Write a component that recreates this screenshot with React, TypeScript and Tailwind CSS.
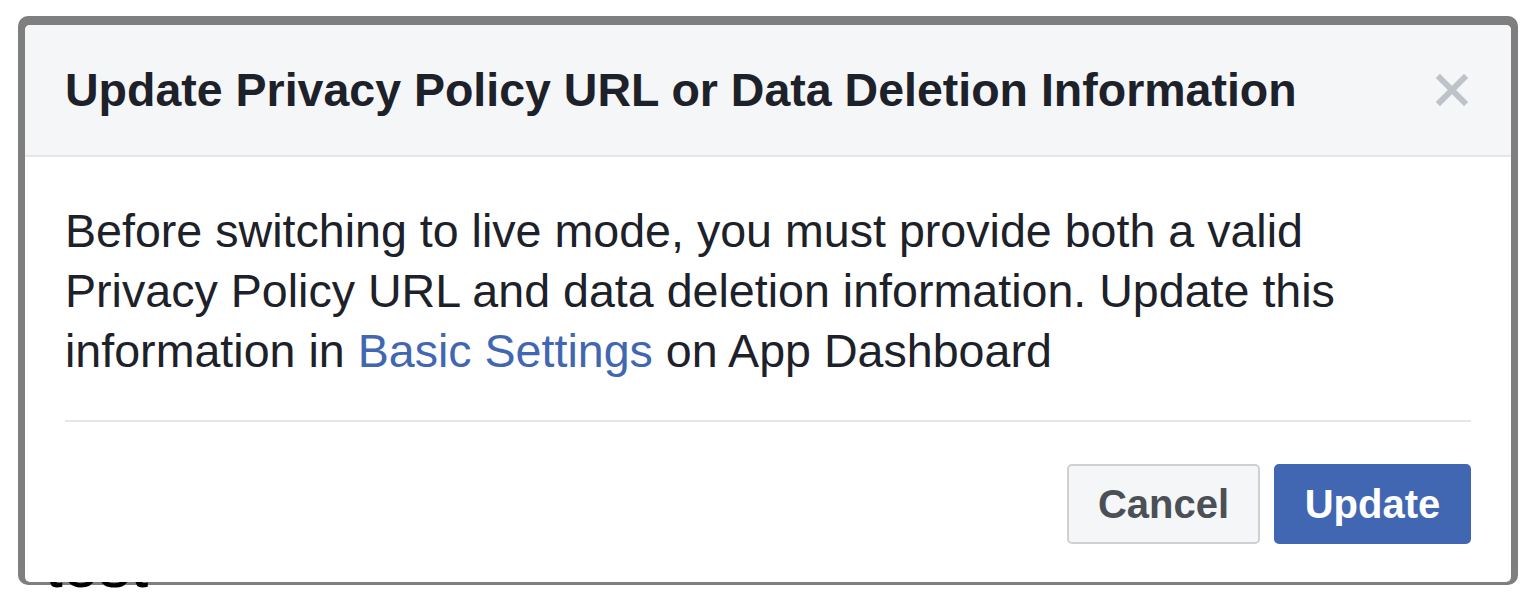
import React from "react";

const font = { fontFamily: '"Liberation Sans", Arial, Helvetica, sans-serif' };

function CloseIcon() {
  return (
    <svg width="34" height="34" viewBox="0 0 34 34" aria-hidden="true">
      <path
        d="M5 5 L29 29 M29 5 L5 29"
        stroke="#bec2c9"
        strokeWidth="6"
        strokeLinecap="square"
        fill="none"
      />
    </svg>
  );
}

export default function App() {
  return (
    <div
      className="w-[1530px] h-[606px] bg-white overflow-hidden pt-[16px] pl-[18px]"
      style={font}>
      <div className="relative w-[1500px] h-[569px] bg-[#7f7f7f] rounded-[10px] pt-[9px] px-[7px] pb-[3px]">
        {/* page text peeking behind the dialog */}
        <span className="absolute left-[27px] top-[517px] text-[64px] leading-none font-normal text-black">
          test
        </span>
        <div className="relative z-10 h-full bg-white rounded-[5px] overflow-hidden flex flex-col">
          <div className="h-[132px] shrink-0 bg-[#f5f6f7] border-b-[2px] border-[#e5e6e9] flex items-center justify-between pl-[40px] pr-[42px]">
            <h1 className="text-[46.5px] font-bold text-[#1d2129] pt-[2px]">
              Update Privacy Policy URL or Data Deletion Information
            </h1>
            <button className="flex items-center justify-center">
              <CloseIcon />
            </button>
          </div>
          <div className="flex-1 px-[40px] pt-[44px]">
            <p className="text-[46.6px] leading-[60px] text-[#1d2129]">
              Before switching to live mode, you must provide both a valid
              <br />
              Privacy Policy URL and data deletion information. Update this
              <br />
              information in{" "}
              <a className="text-[#4267b2]">Basic Settings</a> on App Dashboard
            </p>
            <div className="mt-[39px] h-[2px] bg-[#e5e6e9]" />
            <div className="flex justify-end gap-[14px] mt-[42px]">
              <button className="h-[80px] w-[193px] rounded-[5px] border-[2px] border-[#ced0d4] bg-[#f5f6f7] text-[40px] font-bold text-[#4b4f56]">
                Cancel
              </button>
              <button className="h-[80px] w-[197px] rounded-[5px] border-[2px] border-[#4267b2] bg-[#4267b2] text-[40px] font-bold text-white">
                Update
              </button>
            </div>
          </div>
        </div>
      </div>
    </div>
  );
}
